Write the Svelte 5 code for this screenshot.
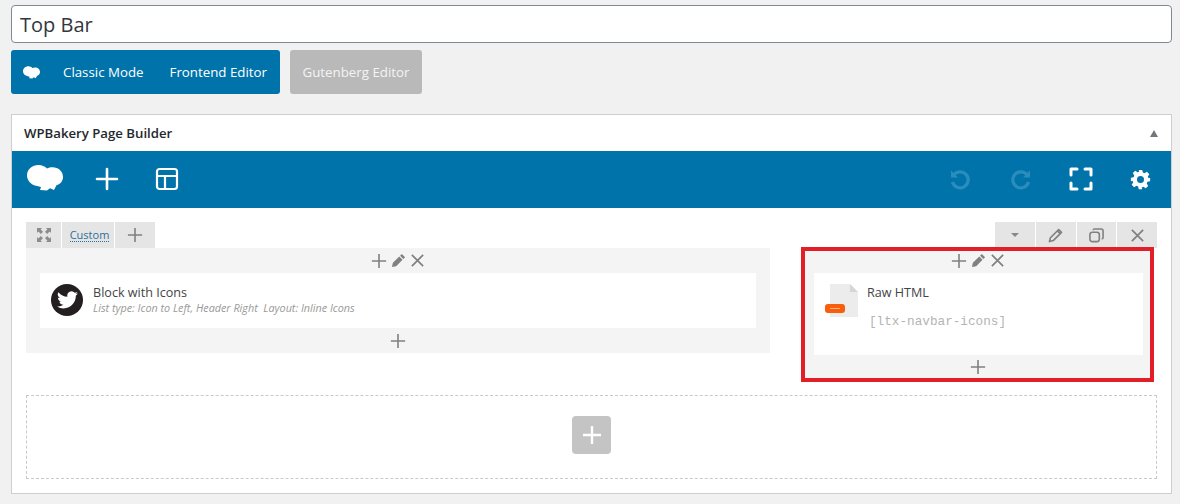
<script lang="ts">
  const cloud = 'M10 21C4 20 0 15.500 0 10.500 0 4.500 5 0 11.500 0 15 0 18 1.500 20 3.500 21.500 2.700 23.500 2.300 25.500 2.300 31.500 2.300 36 6.500 36 12 36 16 33.500 19 29.500 20.300L27 25 23 23.300 20 25.500 13 25 14 22z';
  const plus = 'M9 1v16M1 9h16';
  const cross = 'M2 2l12 12M14 2L2 14';
  const pencil = 'M11.400 1.600l3 3-8.800 8.800-4.100 1.100 1.100-4.100zM10 3l3 3';
  // solid pencil with a light notch under the tip, as on the column controls
  const pencilSolid = 'M11.500 1l3.500 3.500-1.800 1.800-3.500-3.500zM8.800 3.700l3.500 3.500-6.800 6.800L1 15l1-4.500z';
</script>

{#snippet controls()}
  <div class="controls">
    <svg width="16" height="16" viewBox="0 0 18 18"><path d={plus} class="line" /></svg>
    <svg width="15" height="15" viewBox="0 0 16 16"><path d={pencilSolid} fill="#808080" /></svg>
    <svg width="15" height="15" viewBox="0 0 16 16"><path d={cross} class="line" /></svg>
  </div>
{/snippet}

{#snippet addRow()}
  <div class="add-row">
    <svg width="16" height="16" viewBox="0 0 18 18"><path d={plus} class="line" /></svg>
  </div>
{/snippet}

<div class="page">
  <input class="title" value="Top Bar" />

  <div class="switch">
    <div class="blue-group">
      <svg class="logo-small" width="17" height="13" viewBox="0 0 36 26"><path d={cloud} fill="#fff" /></svg>
      <span class="mode classic">Classic Mode</span>
      <span class="mode">Frontend Editor</span>
    </div>
    <div class="gutenberg">Gutenberg Editor</div>
  </div>

  <section class="panel">
    <header class="panel-head">
      <h2>WPBakery Page Builder</h2>
      <span class="caret"></span>
    </header>

    <div class="toolbar">
      <svg class="logo" width="36" height="26" viewBox="0 0 36 26"><path d={cloud} fill="#fff" /></svg>
      <svg class="tool-plus" width="24" height="24" viewBox="0 0 24 24"><path d="M12 2v20M2 12h20" /></svg>
      <svg class="tool-layout" width="24" height="24" viewBox="0 0 24 24">
        <rect x="2" y="2" width="20" height="20" rx="2.500" />
        <path d="M2 9h20M10 9v13" />
      </svg>
      <div class="spacer"></div>
      <svg class="undo" width="24" height="24" viewBox="0 0 24 24"><path d="M5.500 8.500A8 8 0 1 1 4.500 15" /><path class="tip" d="M3 3.500v7h7z" /></svg>
      <svg class="undo redo" width="24" height="24" viewBox="0 0 24 24"><path d="M18.500 8.500A8 8 0 1 0 19.500 15" /><path class="tip" d="M21 3.500v7h-7z" /></svg>
      <svg class="full" width="24" height="24" viewBox="0 0 24 24"><path d="M2 8V2h6M16 2h6v6M22 16v6h-6M8 22H2v-6" /></svg>
      <svg class="gear" width="21" height="21" viewBox="0 0 24 24">
        <path fill="#fff" fill-rule="evenodd" d="M10 1h4l.7 3.100 1.900.8 2.700-1.700 2.800 2.800-1.700 2.700.8 1.900L23 10v4l-3.100.7-.8 1.900 1.700 2.700-2.800 2.800-2.700-1.700-1.900.8L14 23h-4l-.7-3.100-1.900-.8-2.700 1.700-2.800-2.800 1.700-2.700-.8-1.900L1 14v-4l3.100-.7.8-1.900-1.700-2.700 2.800-2.800 2.700 1.700 1.900-.8zM12 8a4 4 0 1 0 0 8 4 4 0 0 0 0-8z" />
      </svg>
    </div>

    <div class="body">
      <div class="row-tools">
        <div class="tabs">
          <span class="tab move">
            <svg width="14" height="14" viewBox="0 0 14 14"><path d="M0 0h5L3.600 1.400 6 3.800 3.800 6 1.400 3.600 0 5zM14 0v5l-1.400-1.400L10.200 6 8 3.800l2.400-2.400L9 0zM0 14V9l1.400 1.400L3.800 8 6 10.200l-2.400 2.400L5 14zM14 14H9l1.400-1.400L8 10.200 10.200 8l2.400 2.400L14 9z" fill="#8c8c8c" /></svg>
          </span>
          <span class="tab custom"><span class="custom-link">Custom</span></span>
          <span class="tab add">
            <svg width="16" height="16" viewBox="0 0 18 18"><path d={plus} class="line" /></svg>
          </span>
        </div>
        <div class="actions">
          <span class="action"><span class="down"></span></span>
          <span class="action"><svg width="15" height="15" viewBox="0 0 16 16"><path d={pencil} class="pen" /></svg></span>
          <span class="action">
            <svg width="15" height="15" viewBox="0 0 16 16"><rect x="1" y="4.500" width="10" height="10" rx="2.500" class="pen" /><path d="M4.500 2.500q0-1.500 1.500-1.500h7q2 0 2 2v7q0 1.500-1.500 1.500" class="pen" /></svg>
          </span>
          <span class="action"><svg width="15" height="15" viewBox="0 0 16 16"><path d={cross} class="line" /></svg></span>
        </div>
      </div>

      <div class="columns">
        <div class="column left">
          {@render controls()}
          <div class="element">
            <span class="twitter">
              <svg width="21" height="18" viewBox="0 0 24 20"><path fill="#fff" d="M24 2.400c-.9.400-1.800.7-2.800.8 1-.6 1.800-1.600 2.200-2.700-1 .6-2 1-3.100 1.200A4.900 4.900 0 0 0 11.900 6.200 14 14 0 0 1 1.700 1 4.900 4.900 0 0 0 3.200 7.600c-.8 0-1.500-.2-2.200-.6 0 2.400 1.700 4.400 3.900 4.900-.7.200-1.500.2-2.200.1.600 2 2.400 3.400 4.600 3.400A9.900 9.900 0 0 1 0 17.400 14 14 0 0 0 7.500 19.600c9.100 0 14.300-7.700 14-14.600 1-.7 1.800-1.600 2.500-2.600z" /></svg>
            </span>
            <div class="element-text">
              <div class="element-name">Block with Icons</div>
              <div class="element-meta">List type: Icon to Left, Header Right&nbsp; Layout: Inline Icons</div>
            </div>
          </div>
          {@render addRow()}
        </div>

        <div class="column right">
          {@render controls()}
          <div class="element raw">
            <span class="file">
              <svg width="33" height="33" viewBox="0 0 33 33"><path d="M5 0h20l8 8v25H5z" fill="#ececec" /><path d="M25 0l8 8h-8z" fill="#d6d6d6" /></svg>
              <span class="file-badge"></span>
            </span>
            <div class="element-text">
              <div class="element-name">Raw HTML</div>
              <div class="code">[ltx-navbar-icons]</div>
            </div>
          </div>
          {@render addRow()}
        </div>
      </div>

      <div class="empty-row">
        <button class="add-big" aria-label="Add element">
          <svg width="20" height="20" viewBox="0 0 20 20"><path d="M10 1v18M1 10h18" /></svg>
        </button>
      </div>
    </div>
  </section>
</div>

<style>
  :global(body) {
    background: #f1f1f1;
    font-family: 'Open Sans', 'Noto Sans', sans-serif;
  }
  .page {
    width: 1180px;
    height: 504px;
    box-sizing: border-box;
    padding: 5px 8px 0 11px;
    overflow: hidden;
  }
  .title {
    display: block;
    width: 100%;
    height: 38px;
    box-sizing: border-box;
    padding: 0 8px;
    border: 1px solid #7e8993;
    border-radius: 4px;
    background: #fff;
    color: #32373c;
    font: 400 20px 'Open Sans', sans-serif;
    outline: none;
  }
  .switch {
    display: flex;
    gap: 10px;
    margin-top: 7px;
    height: 44px;
    font-size: 13.300px;
  }
  .blue-group {
    display: flex;
    align-items: center;
    width: 269px;
    box-sizing: border-box;
    padding-left: 12px;
    border-radius: 3px;
    background: #0073aa;
    color: #fff;
  }
  .logo-small { margin-right: 23px; }
  .classic { margin-right: 26px; }
  .mode { white-space: nowrap; }
  .gutenberg {
    display: flex;
    align-items: center;
    justify-content: center;
    width: 132px;
    border-radius: 3px;
    background: #b9b9b9;
    color: #f4f4f4;
  }
  .panel {
    margin-top: 20px;
    height: 380px;
    box-sizing: border-box;
    border: 1px solid #ccd0d4;
    background: #fff;
  }
  .panel-head {
    display: flex;
    align-items: center;
    justify-content: space-between;
    height: 36px;
    padding: 0 13px 0 12px;
  }
  h2 {
    margin: 0;
    color: #23282d;
    font-size: 13.200px;
    font-weight: 600;
  }
  .caret {
    width: 0;
    height: 0;
    border: 4.500px solid transparent;
    border-top: 0;
    border-bottom: 7px solid #72777c;
  }
  .toolbar {
    display: flex;
    align-items: center;
    height: 57px;
    padding: 0 20px 0 15px;
    background: #0073aa;
  }
  .logo { margin-right: 32px; margin-top: -4px; }
  .tool-plus { margin-right: 36px; }
  .tool-plus, .tool-layout, .undo, .full, .gear { margin-top: -1px; }
  .tool-plus path, .tool-layout rect, .tool-layout path, .full path {
    fill: none;
    stroke: #fff;
    stroke-width: 2.600;
    stroke-linecap: round;
    stroke-linejoin: round;
  }
  .tool-layout rect, .tool-layout path { stroke-width: 2.200; }
  .spacer { flex: 1; }
  .undo { margin-right: 37px; }
  .redo { margin-right: 36px; }
  .undo path {
    fill: none;
    stroke: #2b8dbc;
    stroke-width: 3.200;
  }
  .undo path.tip {
    fill: #2b8dbc;
    stroke: none;
  }
  .full { margin-right: 37px; }
  .full path { stroke-width: 3; }
  .body {
    padding: 14px 14px 0 14px;
  }
  .row-tools {
    display: flex;
    justify-content: space-between;
    height: 26px;
  }
  .tabs, .actions {
    display: flex;
    gap: 1px;
  }
  .tab, .action {
    display: flex;
    align-items: center;
    justify-content: center;
    height: 26px;
    background: #e5e5e5;
  }
  .move { width: 35px; }
  .custom { width: 52px; padding-left: 3px; box-sizing: border-box; }
  .add { width: 40px; }
  .custom-link {
    color: #2b6f9a;
    font-size: 11px;
    border-bottom: 1px dotted #2b6f9a;
    line-height: 13px;
  }
  .action { width: 39.750px; }
  .down {
    width: 0;
    height: 0;
    border: 4px solid transparent;
    border-bottom: 0;
    border-top: 4px solid #888;
  }
  .line, .pen {
    fill: none;
    stroke: #808080;
    stroke-width: 1.800;
  }
  .pen { stroke-width: 1.700; stroke-linejoin: round; }
  .columns {
    display: flex;
    align-items: flex-start;
  }
  .column { background: #f4f4f4; flex: none; }
  .left {
    width: 744px;
    padding: 0 14px;
    box-sizing: border-box;
    height: 105px;
  }
  .right {
    width: 353px;
    height: 135px;
    margin: -1px 0 0 31px;
    padding: 0 7px 0 9px;
    box-sizing: border-box;
    border: 4px solid #e21e26;
  }
  .controls {
    display: flex;
    align-items: center;
    justify-content: center;
    gap: 4px;
    height: 25px;
  }
  .right .controls { height: 22px; padding: 0 1px 3px 0; box-sizing: border-box; }
  .add-row {
    display: flex;
    align-items: center;
    justify-content: center;
    height: 25px;
  }
  .right .add-row { height: 23px; padding: 1px 1px 0 0; box-sizing: border-box; }
  .element {
    display: flex;
    height: 55px;
    background: #fff;
    padding: 11px 11px 0;
    box-sizing: border-box;
  }
  .raw { height: 82px; }
  .twitter {
    display: flex;
    align-items: center;
    justify-content: center;
    flex: none;
    width: 32px;
    height: 32px;
    border-radius: 50%;
    background: #231f20;
    margin-right: 10px;
  }
  .element-text { min-width: 0; padding-top: 1px; }
  .element-name {
    color: #444;
    font-size: 12.600px;
    font-weight: 500;
    line-height: 16px;
  }
  .element-meta {
    color: #999;
    font-size: 10.800px;
    font-style: italic;
    line-height: 14px;
    white-space: nowrap;
  }
  .file {
    position: relative;
    flex: none;
    width: 33px;
    height: 33px;
    margin-right: 9px;
  }
  .file svg { display: block; }
  .file-badge {
    position: absolute;
    left: 0;
    top: 20px;
    width: 20px;
    height: 9px;
    border-radius: 3px;
    background: #f85e0b;
  }
  .file-badge::after {
    content: '';
    position: absolute;
    left: 5px;
    right: 5px;
    top: 4px;
    height: 1px;
    background: #fbb27f;
  }
  .code {
    margin: 14px 0 0 2px;
    color: #b4b4b4;
    font: 12.700px 'Liberation Mono', monospace;
    line-height: 14px;
  }
  .empty-row {
    display: flex;
    align-items: center;
    justify-content: center;
    height: 84px;
    margin-top: 13px;
    padding-bottom: 4px;
    box-sizing: border-box;
    border: 1px dashed #c9c9c9;
  }
  .add-big {
    display: flex;
    align-items: center;
    justify-content: center;
    width: 39px;
    height: 38px;
    padding: 0;
    border: 0;
    border-radius: 4px;
    background: #c4c4c4;
  }
  .add-big path {
    fill: none;
    stroke: #fff;
    stroke-width: 2.400;
  }
</style>
